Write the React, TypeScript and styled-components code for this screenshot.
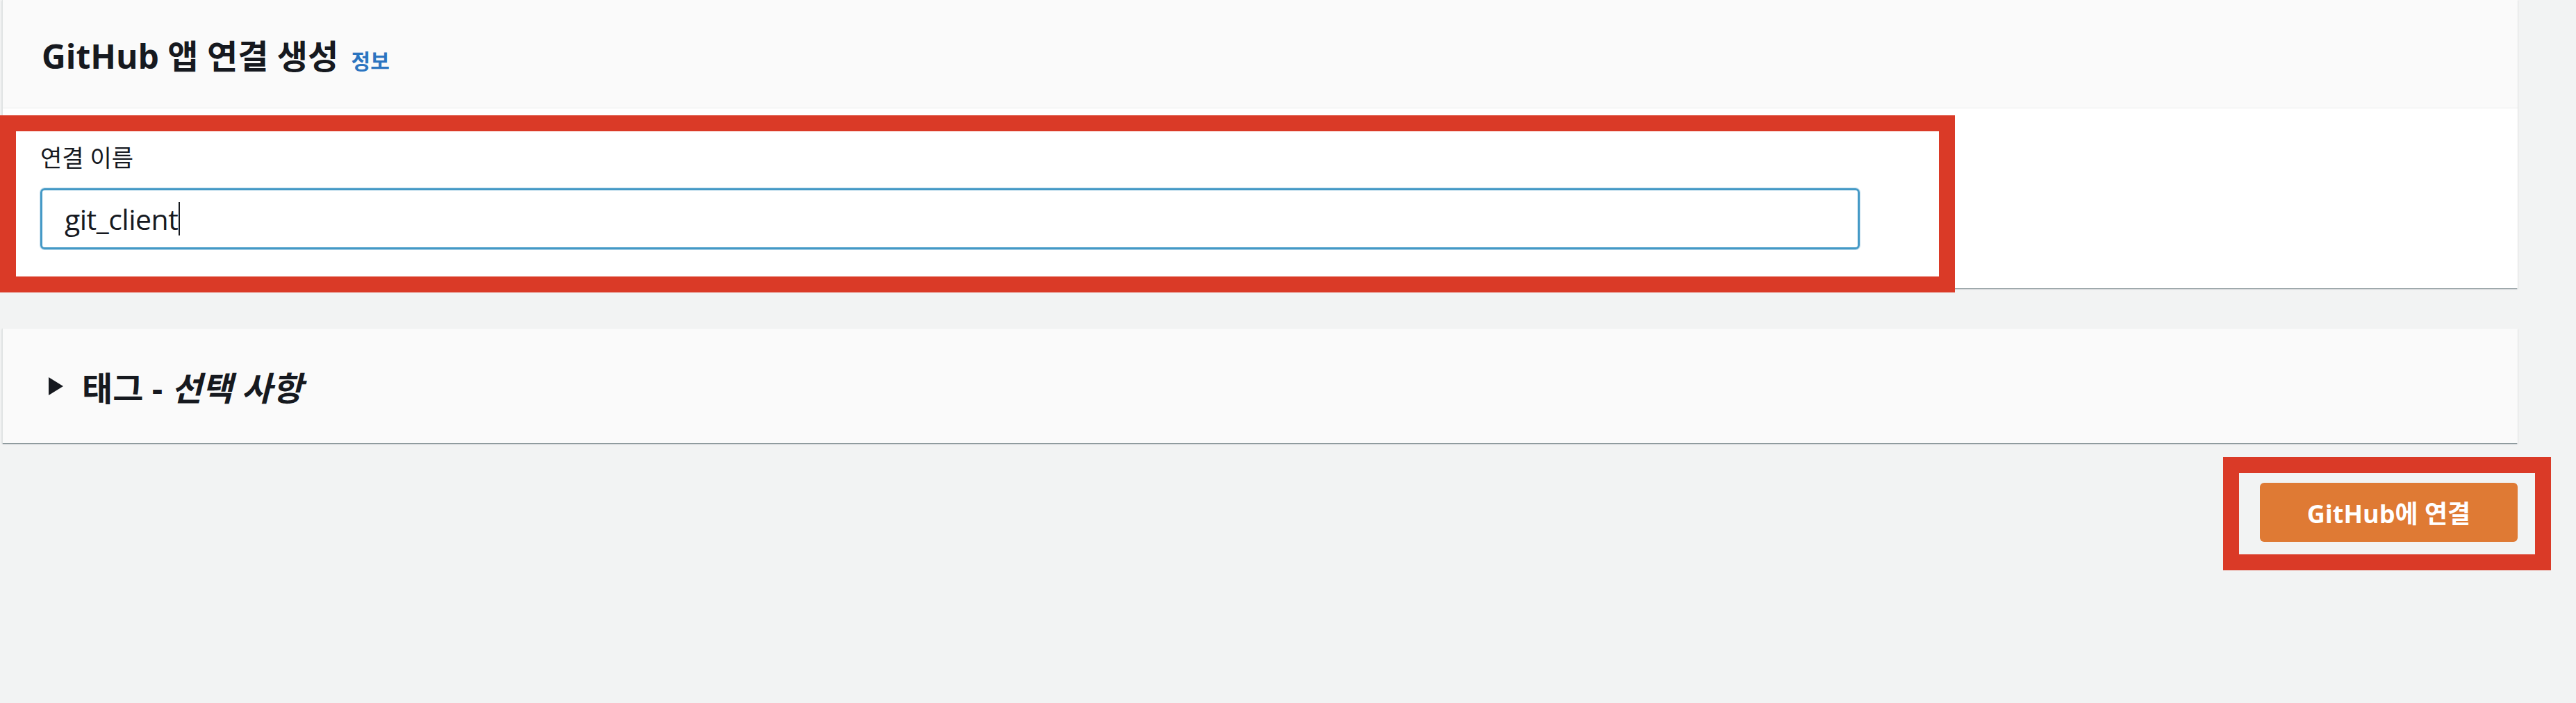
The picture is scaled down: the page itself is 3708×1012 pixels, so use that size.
import styled, { createGlobalStyle } from 'styled-components';

const GlobalStyle = createGlobalStyle`
    html, body {
        margin: 0;
        padding: 0;
        background: #f2f3f3;
        font-family: "Open Sans", "Noto Sans CJK KR", sans-serif;
        color: #16191f;
    }
`;

function App() {
    return (
        <>
            <GlobalStyle />
            <Page>
                <Panel>
                    <PanelHeader>
                        <Title>
                            GitHub 앱 연결 생성 <InfoLink>정보</InfoLink>
                        </Title>
                    </PanelHeader>
                    <PanelBody>
                        <Label>연결 이름</Label>
                        <FakeInput>
                            git_client
                            <Caret />
                        </FakeInput>
                    </PanelBody>
                </Panel>

                <Panel>
                    <ExpandHeader>
                        <svg width="23" height="28" viewBox="0 0 23 28">
                            <polygon points="1,1 22,14 1,27" fill="#16191f" />
                        </svg>
                        <span>
                            태그 - <Optional>선택 사항</Optional>
                        </span>
                    </ExpandHeader>
                </Panel>

                <Actions>
                    <PrimaryButton>GitHub에 연결</PrimaryButton>
                </Actions>

                {/* 스크린샷 위 강조 표시 */}
                <Highlight $top={166} $left={0} $width={2814} $height={255} />
                <Highlight $top={658} $left={3200} $width={472} $height={163} />
            </Page>
        </>
    );
}

const Page = styled.div`
    position: relative;
    min-height: 1012px;
    padding-left: 3px;
    box-sizing: border-box;
    overflow: hidden;
`;

const Panel = styled.section`
    width: 3621px;
    background: #fafafa;
    border-left: 1px solid #dfe3e3;
    box-shadow: 0 2px 1px -1px rgba(0, 28, 36, 0.35), 0 1px 2px 0 rgba(0, 28, 36, 0.2);
    box-sizing: border-box;
    margin-bottom: 58px;
`;

const PanelHeader = styled.div`
    height: 155px;
    display: flex;
    align-items: center;
    padding-left: 56px;
    border-bottom: 1px solid #eaeded;
`;

const Title = styled.h2`
    margin: 0;
    font-size: 48px;
    font-weight: 700;
    letter-spacing: 0;
    color: #16191f;
`;

const InfoLink = styled.a`
    margin-left: 6px;
    font-size: 30px;
    font-weight: 700;
    color: #2b74c0;
    text-decoration: none;
`;

const PanelBody = styled.div`
    background: #ffffff;
    padding: 48px 54px 56px;
`;

const Label = styled.div`
    font-size: 34px;
    line-height: 46px;
    color: #16191f;
    margin-bottom: 21px;
`;

const FakeInput = styled.div`
    width: 2619px;
    height: 88px;
    box-sizing: border-box;
    border: 3px solid #4499c6;
    border-radius: 6px;
    box-shadow: 0 0 0 1px rgba(68, 153, 198, 0.35);
    padding-left: 32px;
    display: flex;
    align-items: center;
    font-size: 41px;
    color: #16191f;
    letter-spacing: -0.5px;
`;

const Caret = styled.span`
    display: inline-block;
    width: 2px;
    height: 48px;
    margin-left: 1px;
    background: #16191f;
`;

const ExpandHeader = styled.div`
    height: 165px;
    display: flex;
    align-items: center;
    gap: 26px;
    padding-left: 65px;
    font-size: 48px;
    font-weight: 700;
`;

const Optional = styled.em`
    font-style: italic;
`;

const Actions = styled.div`
    width: 3621px;
    display: flex;
    justify-content: flex-end;
    margin-top: -1px;
`;

const PrimaryButton = styled.button`
    width: 371px;
    height: 85px;
    border: none;
    border-radius: 6px;
    background: #df7a34;
    color: #ffffff;
    font-family: "Open Sans", "Noto Sans CJK KR", sans-serif;
    font-size: 36px;
    font-weight: 700;
    cursor: pointer;
`;

const Highlight = styled.div<{ $top: number; $left: number; $width: number; $height: number }>`
    position: absolute;
    top: ${(p) => p.$top}px;
    left: ${(p) => p.$left}px;
    width: ${(p) => p.$width}px;
    height: ${(p) => p.$height}px;
    border: 23px solid #da3a27;
    box-sizing: border-box;
    pointer-events: none;
`;

export default App;
